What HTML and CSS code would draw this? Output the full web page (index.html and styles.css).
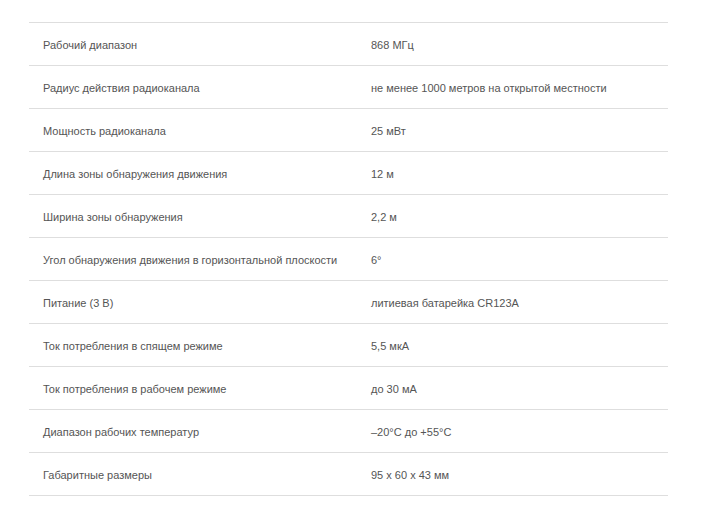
FILE: index.html
```html
<!DOCTYPE html>
<html lang="ru">
<head>
<meta charset="utf-8">
<link rel="stylesheet" href="styles.css">
</head>
<body>
<div class="wrap">
<table class="specs">
<tbody>
<tr><td class="k">Рабочий диапазон</td><td class="v">868 МГц</td></tr>
<tr><td class="k">Радиус действия радиоканала</td><td class="v">не менее 1000 метров на открытой местности</td></tr>
<tr><td class="k">Мощность радиоканала</td><td class="v">25 мВт</td></tr>
<tr><td class="k">Длина зоны обнаружения движения</td><td class="v">12 м</td></tr>
<tr><td class="k">Ширина зоны обнаружения</td><td class="v">2,2 м</td></tr>
<tr><td class="k">Угол обнаружения движения в горизонтальной плоскости</td><td class="v">6°</td></tr>
<tr><td class="k">Питание (3 В)</td><td class="v">литиевая батарейка CR123A</td></tr>
<tr><td class="k">Ток потребления в спящем режиме</td><td class="v">5,5 мкА</td></tr>
<tr><td class="k">Ток потребления в рабочем режиме</td><td class="v">до 30 мА</td></tr>
<tr><td class="k">Диапазон рабочих температур</td><td class="v">–20°С до +55°С</td></tr>
<tr><td class="k">Габаритные размеры</td><td class="v">95 х 60 х 43 мм</td></tr>
</tbody>
</table>
</div>
</body>
</html>
```
FILE: styles.css
```css
html, body {
  margin: 0;
  padding: 0;
  background: #fff;
}
.wrap {
  padding: 22px 0 0 29px;
}
.specs {
  width: 639px;
  border-collapse: collapse;
  table-layout: fixed;
  font-family: "Liberation Sans", Arial, sans-serif;
  font-size: 11px;
  color: #555;
  border-top: 1px solid #dedede;
}
.specs tr {
  border-bottom: 1px solid #dedede;
}
.specs td {
  box-sizing: border-box;
  height: 43px;
  padding: 1px 0 0 14px;
  vertical-align: middle;
  white-space: nowrap;
}
.specs td.k {
  width: 342px;
}
.specs td.v {
  padding-left: 0;
}
```
